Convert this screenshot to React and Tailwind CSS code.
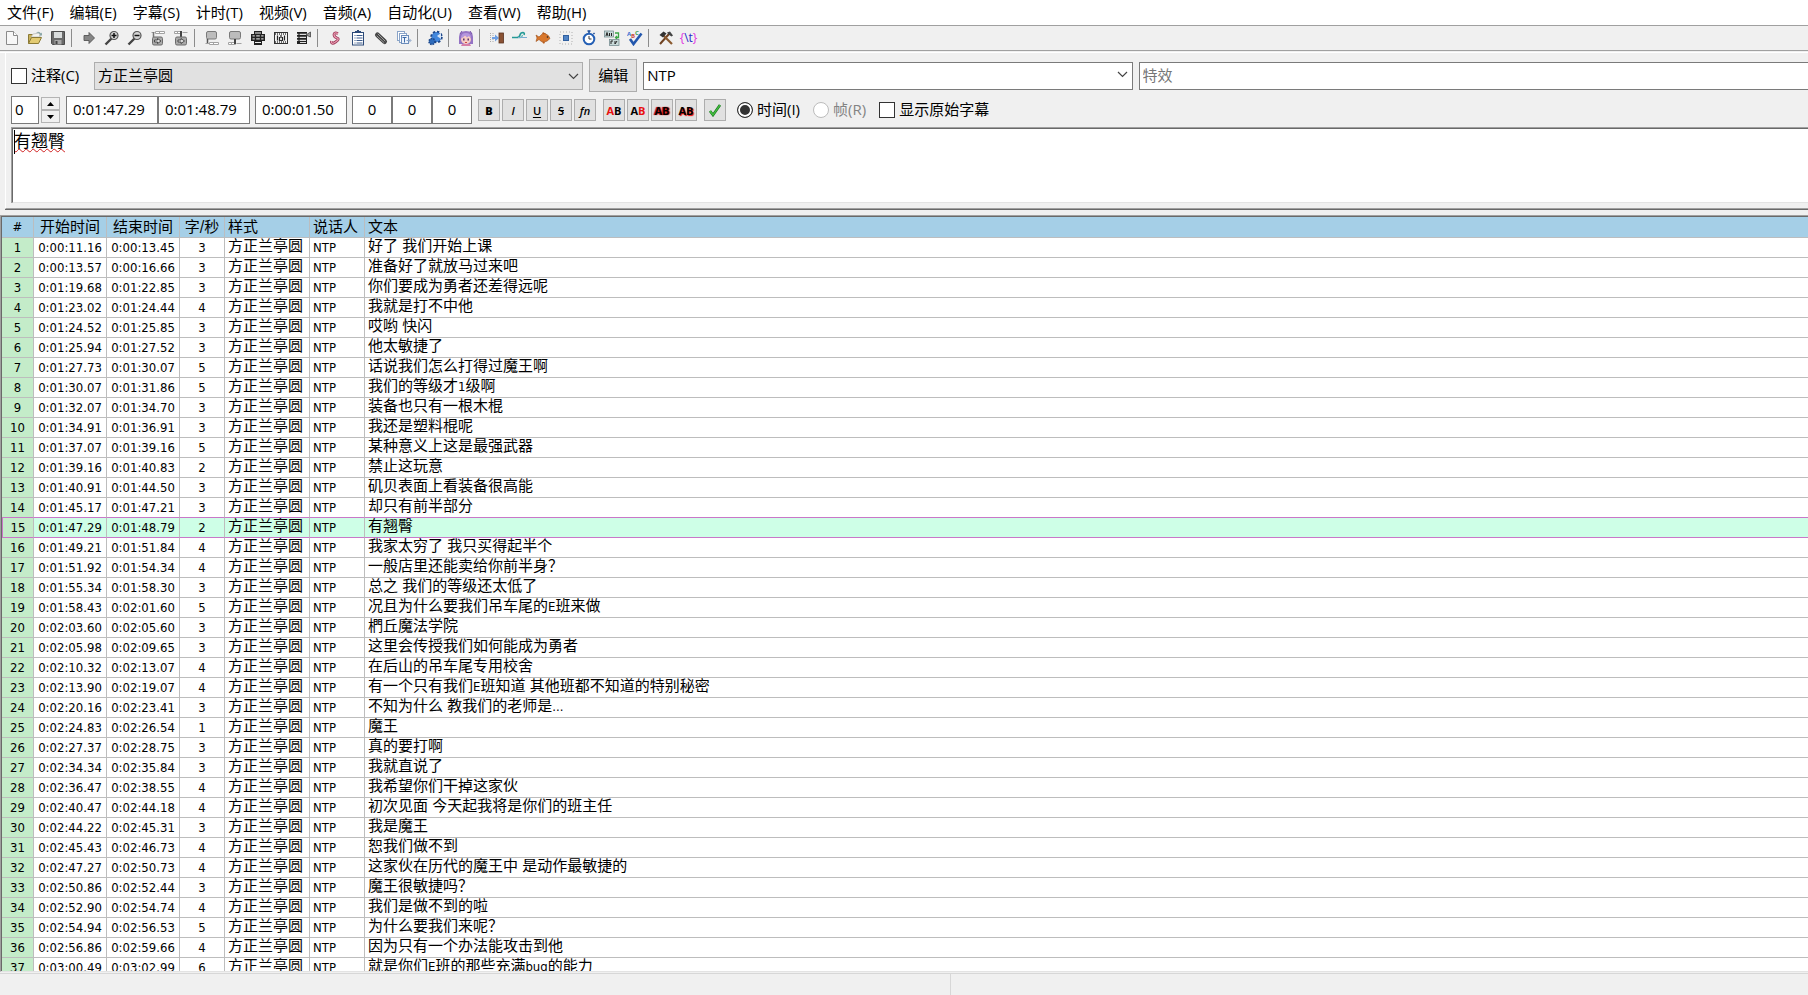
import { Fragment } from "react";

const menus = ["文件(F)", "编辑(E)", "字幕(S)", "计时(T)", "视频(V)", "音频(A)", "自动化(U)", "查看(W)", "帮助(H)"];

const rows = [
  ["0:00:11.16", "0:00:13.45", 3, "好了 我们开始上课"],
  ["0:00:13.57", "0:00:16.66", 3, "准备好了就放马过来吧"],
  ["0:01:19.68", "0:01:22.85", 3, "你们要成为勇者还差得远呢"],
  ["0:01:23.02", "0:01:24.44", 4, "我就是打不中他"],
  ["0:01:24.52", "0:01:25.85", 3, "哎哟 快闪"],
  ["0:01:25.94", "0:01:27.52", 3, "他太敏捷了"],
  ["0:01:27.73", "0:01:30.07", 5, "话说我们怎么打得过魔王啊"],
  ["0:01:30.07", "0:01:31.86", 5, "我们的等级才1级啊"],
  ["0:01:32.07", "0:01:34.70", 3, "装备也只有一根木棍"],
  ["0:01:34.91", "0:01:36.91", 3, "我还是塑料棍呢"],
  ["0:01:37.07", "0:01:39.16", 5, "某种意义上这是最强武器"],
  ["0:01:39.16", "0:01:40.83", 2, "禁止这玩意"],
  ["0:01:40.91", "0:01:44.50", 3, "矶贝表面上看装备很高能"],
  ["0:01:45.17", "0:01:47.21", 3, "却只有前半部分"],
  ["0:01:47.29", "0:01:48.79", 2, "有翘臀"],
  ["0:01:49.21", "0:01:51.84", 4, "我家太穷了 我只买得起半个"],
  ["0:01:51.92", "0:01:54.34", 4, "一般店里还能卖给你前半身？"],
  ["0:01:55.34", "0:01:58.30", 3, "总之 我们的等级还太低了"],
  ["0:01:58.43", "0:02:01.60", 5, "况且为什么要我们吊车尾的E班来做"],
  ["0:02:03.60", "0:02:05.60", 3, "椚丘魔法学院"],
  ["0:02:05.98", "0:02:09.65", 3, "这里会传授我们如何能成为勇者"],
  ["0:02:10.32", "0:02:13.07", 4, "在后山的吊车尾专用校舍"],
  ["0:02:13.90", "0:02:19.07", 4, "有一个只有我们E班知道 其他班都不知道的特别秘密"],
  ["0:02:20.16", "0:02:23.41", 3, "不知为什么 教我们的老师是..."],
  ["0:02:24.83", "0:02:26.54", 1, "魔王"],
  ["0:02:27.37", "0:02:28.75", 3, "真的要打啊"],
  ["0:02:34.34", "0:02:35.84", 3, "我就直说了"],
  ["0:02:36.47", "0:02:38.55", 4, "我希望你们干掉这家伙"],
  ["0:02:40.47", "0:02:44.18", 4, "初次见面 今天起我将是你们的班主任"],
  ["0:02:44.22", "0:02:45.31", 3, "我是魔王"],
  ["0:02:45.43", "0:02:46.73", 4, "恕我们做不到"],
  ["0:02:47.27", "0:02:50.73", 4, "这家伙在历代的魔王中 是动作最敏捷的"],
  ["0:02:50.86", "0:02:52.44", 3, "魔王很敏捷吗？"],
  ["0:02:52.90", "0:02:54.74", 4, "我们是做不到的啦"],
  ["0:02:54.94", "0:02:56.53", 5, "为什么要我们来呢？"],
  ["0:02:56.86", "0:02:59.66", 4, "因为只有一个办法能攻击到他"],
  ["0:03:00.49", "0:03:02.99", 6, "就是你们E班的那些充满bug的能力"],
];

const ACTIVE = 14;

const icons = {
  newFile: (
    <>
      <path d="M2.5 1.5h7l4 4v9h-11z" fill="#f7f7f7" stroke="#8a8a8a" />
      <path d="M9.5 1.5v4h4" fill="#fff" stroke="#8a8a8a" />
    </>
  ),
  open: (
    <>
      <path d="M1.5 13.5v-9h4l1 1.5h5v2" fill="#c9b25c" stroke="#8b7a35" />
      <path d="M4 7l2-3 7-1v4z" fill="#f4f4ee" stroke="#aaa" strokeWidth=".6" />
      <path d="M1.5 13.5l3-6h10l-3 6z" fill="#e3cb72" stroke="#8b7a35" />
      <path d="M9 2.500q3-2 5 1l1-1v3h-3l1-1q-1-2-4-2z" fill="#8aa7a8" />
    </>
  ),
  save: (
    <>
      <path d="M1.500 1.500h13v13h-12l-1-1z" fill="#6a6a6a" stroke="#4c4c4c" />
      <path d="M4 2h8v6H4z" fill="#d9dcdc" />
      <path d="M4.500 10h7v4.500h-7z" fill="#a9a9a9" />
      <path d="M5.500 11h2v3h-2z" fill="#444" />
    </>
  ),
  jump: <path d="M3 5.500h5v-3l5.500 5.500-5.500 5.500v-3H3z" fill="#858585" stroke="#555" strokeWidth=".9" />,
  zoomIn: (
    <>
      <path d="M1.500 14.500l6-6" stroke="#444" strokeWidth="2.400" />
      <circle cx="10" cy="5.500" r="4" fill="#d4d4d4" stroke="#555" strokeWidth="1.200" />
      <path d="M7.500 5.500h5M10 3v5" stroke="#111" strokeWidth="1.500" />
    </>
  ),
  zoomOut: (
    <>
      <path d="M1.500 14.500l6-6" stroke="#444" strokeWidth="2.400" />
      <circle cx="10" cy="5.500" r="4" fill="#d4d4d4" stroke="#555" strokeWidth="1.200" />
      <path d="M7.500 5.500h5" stroke="#111" strokeWidth="1.500" />
    </>
  ),
  videoStart: (
    <>
      <path d="M5.500 1.500h9v2h-9zM9.500 1.500v2M1.500 2.500h3" fill="#fff" stroke="#a2a2a2" />
      <path d="M3.500 2v5" stroke="#777" strokeWidth="1.500" />
      <rect x="2.500" y="7" width="10" height="8" rx="1.500" fill="#a9a9a9" stroke="#6c6c6c" />
      <path d="M4.500 10h3V8.500l3.500 2.500-3.500 2.500V12h-3z" fill="#ddd" stroke="#333" strokeWidth=".8" />
    </>
  ),
  videoEnd: (
    <>
      <path d="M1.500 1.500h6v2h-6zM4.500 1.500v2M9.500 2.500h5" fill="#fff" stroke="#a2a2a2" />
      <path d="M8 1v6" stroke="#444" strokeWidth="2" />
      <rect x="2.500" y="7" width="11" height="8" rx="1.500" fill="#a9a9a9" stroke="#6c6c6c" />
      <path d="M5 10h3V8.500l3.500 2.500L8 13.500V12H5z" fill="#ddd" stroke="#333" strokeWidth=".8" />
    </>
  ),
  setStart: (
    <>
      <rect x="2.500" y="1.500" width="10" height="7.500" rx="1.500" fill="#bcbcbc" stroke="#7a7a7a" />
      <path d="M3.500 9v5" stroke="#555" strokeWidth="1.500" />
      <path d="M1.500 13.500h4M5.500 12.500h9v2h-9zM9.500 12.500v2" fill="#fff" stroke="#a2a2a2" />
    </>
  ),
  setEnd: (
    <>
      <rect x="2.500" y="1.500" width="11" height="7.500" rx="1.500" fill="#bcbcbc" stroke="#7a7a7a" />
      <path d="M1.500 12.500h7v2h-7zM4.500 12.500v2M9.500 13.500h5" fill="#fff" stroke="#a2a2a2" />
      <path d="M8 9v5" stroke="#444" strokeWidth="2" />
    </>
  ),
  snapScene: (
    <>
      <path d="M4 1h8v3h3v7h-3v4H4v-4H1V4h3z" fill="#222" />
      <path d="M5 3h6M5 12.500h6" stroke="#eee" strokeWidth="1.200" />
      <path d="M2.500 5.800h11M2.500 8.800h11" stroke="#ccc" strokeWidth="1.200" />
      <path d="M5.500 4v8M10.500 4v8" stroke="#222" strokeWidth="1.400" />
    </>
  ),
  selectVisible: (
    <>
      <rect x="1.500" y="2.500" width="13" height="11" fill="#f2f2f2" stroke="#333" />
      <path d="M2 4h12M2 12h12" stroke="#444" strokeWidth="1.500" strokeDasharray="1 1" />
      <path d="M4.500 5.500v5M11.500 5.500v5M6.500 7v4M9.500 7v4M8 5v3" stroke="#222" strokeWidth="1.200" />
      <path d="M6.500 10.500h3" stroke="#333" />
    </>
  ),
  snapVideo: (
    <>
      <rect x="1" y="2" width="10" height="12" fill="#222" />
      <path d="M1 4.300h10M1 7.300h9M1 10.300h9M4 12.500h6" stroke="#ddd" strokeWidth="1.200" />
      <path d="M3 2v12" stroke="#222" strokeWidth="1.200" />
      <path d="M10 5l4.500-3v5z" fill="#999" stroke="#333" strokeWidth=".7" />
    </>
  ),
  style: (
    <>
      <path d="M11 3.500q-4-1.500-4 1t3 3.500-1.500 4-4-1" fill="none" stroke="#9b3957" strokeWidth="2.800" />
      <path d="M11 3.500q-4-1.500-4 1t3 3.500-1.500 4-4-1" fill="none" stroke="#eb9bb2" strokeWidth="1.200" />
    </>
  ),
  props: (
    <>
      <rect x="2.500" y="2.500" width="11" height="12.500" fill="#fff" stroke="#2c4a78" />
      <path d="M5 2.500h6V1H9V0H7v1H5z" fill="#2c4a78" />
      <path d="M4.500 5.500h1M6.500 5.500h6M4.500 8h1M6.500 8h6M4.500 10.500h1M6.500 10.500h6M4.500 13h1M6.500 13h6" stroke="#3e5d8d" />
    </>
  ),
  attach: (
    <>
      <path d="M4.500 5l7 6.500" stroke="#444" strokeWidth="5" strokeLinecap="round" />
      <path d="M5 4l7 7M4 6l7 6.500" stroke="#a8a8a8" strokeWidth=".9" strokeLinecap="round" />
    </>
  ),
  fonts: (
    <>
      <rect x="1.500" y="1.500" width="7" height="9" fill="#fff" stroke="#8aa4c8" />
      <rect x="3.500" y="3.500" width="7" height="9" fill="#fff" stroke="#8aa4c8" />
      <rect x="5.500" y="5.500" width="7" height="8" fill="#eef4fc" stroke="#6b8dbb" />
      <path d="M6.500 7.500h4M8.500 7.500v5" stroke="#3a69a8" />
      <path d="M10.500 10.500h4M13 8.500l2 2-2 2" stroke="#8aa4c8" fill="none" />
    </>
  ),
  automation: (
    <>
      <circle cx="9.500" cy="7" r="5" fill="#3d7ed0" stroke="#1c4587" strokeWidth="2.500" strokeDasharray="2.200 1.700" />
      <circle cx="9.500" cy="7" r="4.500" fill="#4387dc" />
      <path d="M10 6l4-3v6z" fill="#d8e6f8" />
      <circle cx="5" cy="11.500" r="3" fill="#2f6cbc" stroke="#1c4587" strokeWidth="1.500" strokeDasharray="1.500 1" />
    </>
  ),
  assistant: (
    <>
      <path d="M1 7Q1 1 8 1t7 6v7H1z" fill="#9473c4" />
      <path d="M2 4l2-3M14 4l-2-3" stroke="#7652a8" />
      <ellipse cx="8" cy="9.500" rx="5" ry="4.500" fill="#f8cdc4" />
      <path d="M3 8q0-5 5-5t5 5l-2-2-2 1.500-2-2-2 2z" fill="#b596dd" />
      <path d="M5.800 8.500v2M10.200 8.500v2" stroke="#4a2b66" strokeWidth="1.400" />
      <path d="M7 12.500h2" stroke="#c44" />
      <path d="M4 14h8l1 2H3z" fill="#d77fa8" />
    </>
  ),
  shift: (
    <>
      <path d="M1.500 3v10M4 3v10" stroke="#aaa" strokeDasharray="1 1" />
      <path d="M3 7h3V4.500L10 8l-4 3.500V9H3z" fill="#6fa0e4" />
      <rect x="10" y="3" width="4.500" height="10" fill="#8a5234" stroke="#5a3220" strokeWidth=".8" />
    </>
  ),
  timing: (
    <>
      <path d="M0 7.500h5q2.500 0 3-2.500T11 2.500q2 .5 1 2.500" fill="none" stroke="#259a96" strokeWidth="1.600" />
      <path d="M7 7.500q3 .5 3.500-2.500" fill="none" stroke="#5fbab5" strokeWidth="1.300" />
      <path d="M6 7.500h9" stroke="#79aed2" />
    </>
  ),
  kanji: (
    <>
      <path d="M1 5l3 2q3-4 6-3.500Q14 5 15 8.500 12 12 9 12q-3 0-5-2.500L1 11.500 2 8z" fill="#d9772b" stroke="#9b4b14" strokeWidth=".6" />
      <path d="M7 4l1-2 3 2M7 12l2 2 1-2" fill="#b75c1c" />
      <circle cx="12.500" cy="7" r=".8" fill="#222" />
    </>
  ),
  resample: (
    <>
      <rect x="2" y="2" width="12" height="12" fill="none" stroke="#b0b0b0" strokeDasharray="1 2" />
      <rect x="5.500" y="5.500" width="5" height="5" fill="#4e82c4" stroke="#2f5f9f" />
    </>
  ),
  timer: (
    <>
      <path d="M6.500 1h3M8 1v2M12.500 3l1 1" stroke="#1b4a96" strokeWidth="1.500" />
      <circle cx="8" cy="9" r="5.300" fill="#fff" stroke="#2560b5" strokeWidth="2" />
      <path d="M8 6v3h2.500" stroke="#333" fill="none" />
    </>
  ),
  translate: (
    <>
      <rect x=".5" y="1" width="9" height="6" fill="#c8d9d9" stroke="#6a8388" strokeWidth=".7" />
      <path d="M2 6l1-3.500L4 6M5.500 3v3M7.500 3v3" stroke="#222" fill="none" />
      <path d="M11 3h3.500v4.500H12M13 6l-1.500 1.500L13 9" stroke="#3aa648" strokeWidth="1.300" fill="none" />
      <rect x="5.500" y="9.500" width="9.500" height="6" fill="#c8d9d9" stroke="#6a8388" strokeWidth=".7" />
      <path d="M7 14v-3h2M11 11v3l2-3" stroke="#222" fill="none" />
    </>
  ),
  spell: (
    <>
      <path d="M3 9l3.500 5L14.500 3.500" fill="none" stroke="#2357ad" strokeWidth="2.600" />
      <text x="0" y="6" fontSize="6" fontWeight="700" fill="#3a6fd0">A</text>
      <text x="4" y="8" fontSize="6" fontWeight="700" fill="#c8443d">B</text>
      <text x="8" y="5" fontSize="6" fontWeight="700" fill="#3a9b4a">C</text>
    </>
  ),
  options: (
    <>
      <path d="M2 14L11 4" stroke="#6f4222" strokeWidth="2" />
      <path d="M5 5l9 9" stroke="#8a5a30" strokeWidth="2.200" />
      <path d="M1.500 5l4-3.500 3 2-3.500 4z" fill="#333" />
      <path d="M9 2.500l3-1 3 4-1.500 1-3-2z" fill="#444" />
    </>
  ),
};

const toolbar = [
  [["新建", "newFile"], ["打开", "open"], ["保存", "save"]],
  [["跳转", "jump"], ["放大", "zoomIn"], ["缩小", "zoomOut"], ["视频到开始", "videoStart"], ["视频到结束", "videoEnd"]],
  [["设置开始", "setStart"], ["设置结束", "setEnd"], ["对齐场景", "snapScene"], ["选择可见", "selectVisible"], ["对齐视频", "snapVideo"]],
  [["样式", "style"], ["属性", "props"], ["附件", "attach"], ["字体", "fonts"]],
  [["自动化", "automation"]],
  [["助手", "assistant"]],
  [["平移时间", "shift"], ["后期处理", "timing"], ["汉字计时", "kanji"], ["重设分辨率", "resample"], ["计时", "timer"], ["翻译", "translate"], ["拼写检查", "spell"]],
  [["选项", "options"], ["标签", "tags"]],
];

const fieldClass = "h-7 border border-[#7a7a7a] bg-white pb-0.5 outline-none";
const smallButton = "flex h-[22px] w-[22px] items-center justify-center border border-[#adadad] bg-[#e1e1e1] text-[11px] leading-none";

function ToolButton({ label, icon }) {
  return (
    <button type="button" aria-label={label} className="flex h-6 w-[23px] items-center justify-center">
      {icon === "tags" ? (
        <span className="text-[12px] text-[#e030e0]">
          {"{"}
          <span className="text-[#2a2ac8]">\t</span>
          {"}"}
        </span>
      ) : (
        <svg width="16" height="16" viewBox="0 0 16 16" fill="none">{icons[icon]}</svg>
      )}
    </button>
  );
}

function Chevron() {
  return (
    <svg width="11" height="7" viewBox="0 0 11 7" fill="none" stroke="#444" strokeWidth="1.200">
      <path d="M1 1l4.500 4.500L10 1" />
    </svg>
  );
}

function CheckBox({ label }) {
  return (
    <label className="flex items-center gap-1">
      <input type="checkbox" className="h-4 w-4 appearance-none border border-[#333] bg-white" />
      <span className="pb-0.5 whitespace-nowrap">{label}</span>
    </label>
  );
}

// Latin runs are drawn smaller than the Chinese text around them
function LineText({ text }) {
  return text.split(/([A-Za-z0-9.]+)/).map((part, i) => (i % 2 ? <span key={i} className="text-[13px]">{part}</span> : part));
}

function EditBox() {
  return (
    <section className="ml-[5px] flex flex-col border-b border-l border-b-[#a0a0a0] border-l-white pt-1.5 pb-[5px] pl-[5px] shadow-[0_1px_0_#696969]">
      <div className="flex h-[33px] items-center gap-1.5">
        <div className="w-[77px]"><CheckBox label="注释(C)" /></div>
        <div className="relative flex h-7 min-w-0 flex-[489_1_0%]">
          <select aria-label="样式" className="w-full appearance-none border border-[#adadad] bg-[#e1e1e1] px-[3px] pb-0.5 outline-none">
            <option>方正兰亭圆</option>
          </select>
          <span className="pointer-events-none absolute top-[11px] right-1"><Chevron /></span>
        </div>
        <button type="button" className="h-[33px] w-12 border border-[#adadad] bg-[#e1e1e1] pb-0.5">编辑</button>
        <div className={`flex min-w-0 flex-[487_1_0%] items-center ${fieldClass}`}>
          <input aria-label="说话人" defaultValue="NTP" className="min-w-0 flex-1 px-[3px] outline-none" />
          <button type="button" aria-label="展开说话人" className="pr-1"><Chevron /></button>
        </div>
        <input aria-label="特效" placeholder="特效" className={`min-w-0 flex-[662_1_0%] border-r-0 px-[3px] placeholder:text-[#767676] ${fieldClass}`} />
      </div>

      <div className="mt-1 flex h-7 items-center">
        <input aria-label="层" defaultValue="0" className={`w-7 px-[3px] ${fieldClass}`} />
        <div className="ml-0.5 flex w-[19px] flex-col">
          {["M0 4l3.500-4L7 4z", "M0 0l3.500 4L7 0z"].map((d, i) => (
            <button key={d} type="button" aria-label={i ? "减少" : "增加"} className="flex h-[13px] items-center justify-center border border-[#b4b4b4] bg-[#f0f0f0]">
              <svg width="7" height="4" viewBox="0 0 7 4"><path d={d} /></svg>
            </button>
          ))}
        </div>
        <input aria-label="开始时间" defaultValue="0:01:47.29" className={`ml-1.5 w-[92px] px-1.5 ${fieldClass}`} />
        <input aria-label="结束时间" defaultValue="0:01:48.79" className={`w-[92px] px-1.5 ${fieldClass}`} />
        <input aria-label="时长" defaultValue="0:00:01.50" className={`ml-[5px] w-[92px] px-1.5 ${fieldClass}`} />
        <div className="ml-[5px] flex">
          {["左边距", "右边距", "垂直边距"].map((name) => (
            <input key={name} aria-label={name} defaultValue="0" className={`w-10 text-center ${fieldClass}`} />
          ))}
        </div>

        <div className="ml-1.5 flex gap-0.5">
          <button type="button" aria-label="粗体" className={`font-extrabold ${smallButton}`}>B</button>
          <button type="button" aria-label="斜体" className={`font-semibold italic ${smallButton}`}>I</button>
          <button type="button" aria-label="下划线" className={`font-semibold underline underline-offset-2 ${smallButton}`}>U</button>
          <button type="button" aria-label="删除线" className={`font-semibold line-through ${smallButton}`}>S</button>
          <button type="button" aria-label="字体名" className={`font-semibold italic ${smallButton}`}>fn</button>
        </div>
        <div className="ml-[7px] flex gap-0.5">
          <button type="button" aria-label="主要颜色" className={`font-bold ${smallButton}`}><span className="text-[#e81010]">A</span>B</button>
          <button type="button" aria-label="次要颜色" className={`font-bold ${smallButton}`}>A<span className="text-[#e81010]">B</span></button>
          <button type="button" aria-label="边框颜色" className={`font-bold text-shadow-[1px_0_1px_#c00,-1px_0_1px_#c00] ${smallButton}`}>AB</button>
          <button type="button" aria-label="阴影颜色" className={`font-bold text-shadow-[1px_1px_1px_#e00] ${smallButton}`}>AB</button>
        </div>
        <button type="button" aria-label="提交" className={`ml-[7px] ${smallButton}`}>
          <svg width="14" height="14" viewBox="0 0 14 14" fill="none">
            <path d="M2 8l3 4L12 2" stroke="#1b7a22" strokeWidth="2.600" />
            <path d="M2 8l3 4L12 2" stroke="#46c440" strokeWidth="1.300" />
          </svg>
        </button>

        <label className="ml-[11px] flex items-center gap-1">
          <input type="radio" name="unit" defaultChecked className="h-4 w-4 appearance-none rounded-full border border-[#333] bg-white checked:bg-[#333] checked:shadow-[inset_0_0_0_2px_#fff]" />
          <span className="pb-0.5">时间(I)</span>
        </label>
        <label className="ml-[13px] flex items-center gap-1 text-[#838383]">
          <input type="radio" name="unit" disabled className="h-4 w-4 appearance-none rounded-full border border-[#bcbcbc] bg-white" />
          <span className="pb-0.5">帧(R)</span>
        </label>
        <div className="ml-[13px]"><CheckBox label="显示原始字幕" /></div>
      </div>

      <div className="relative mt-[3px] flex h-[76px] border-t border-l border-[#a0a0a0]">
        <textarea
          aria-label="字幕文本"
          spellCheck={false}
          defaultValue="有翘臀"
          className="w-full resize-none border-t border-b border-l border-t-[#696969] border-b-[#e3e3e3] border-l-[#696969] bg-white px-px text-[17px] leading-6 underline decoration-[#d02020] decoration-wavy decoration-1 underline-offset-1 outline-none"
        />
        <span className="absolute top-0.5 left-0.5 h-6 w-px bg-black" />
      </div>
    </section>
  );
}

function SubtitleGrid() {
  return (
    <div className="mt-1.5 min-h-0 flex-1 overflow-hidden border-t border-b border-l border-t-[#a0a0a0] border-b-[#e3e3e3] border-l-[#a0a0a0]">
      <div className="h-full overflow-hidden border-t border-l border-[#696969] bg-white">
        <table className="w-full table-fixed border-separate border-spacing-0 text-left font-['DejaVu_Sans_Condensed','Noto_Sans_CJK_SC',sans-serif] text-[15px] leading-[18px] whitespace-nowrap">
          <colgroup>
            <col className="w-8" />
            <col className="w-[73px]" />
            <col className="w-[73px]" />
            <col className="w-[45px]" />
            <col className="w-[85px]" />
            <col className="w-[55px]" />
            <col />
          </colgroup>
          <thead>
            <tr className="h-[21px] bg-[#a5cfe7] [&>th]:border-r [&>th]:border-b [&>th]:border-[#bbbdbf] [&>th]:p-0 [&>th]:font-normal [&>th:last-child]:border-r-0">
              <th className="text-center text-[13px]">#</th>
              <th className="text-center">开始时间</th>
              <th className="text-center">结束时间</th>
              <th className="text-center">字/秒</th>
              <th><span className="pl-[3px]">样式</span></th>
              <th><span className="pl-[3px]">说话人</span></th>
              <th><span className="pl-[3px]">文本</span></th>
            </tr>
          </thead>
          <tbody>
            {rows.map(([start, end, cps, text], i) => {
              const line = i === ACTIVE || i === ACTIVE - 1 ? "[&>td]:border-b-[#c878c8]" : "[&>td]:border-b-[#bdbdbd]";
              return (
                <tr key={start} className={`h-5 [&>td]:border-r [&>td]:border-b [&>td]:border-r-[#bdbdbd] [&>td]:p-0 [&>td:last-child]:border-r-0 ${line} ${i === ACTIVE ? "bg-[#ceffe7]" : ""}`}>
                  <td className={`bg-[#c4ecc9] text-center text-[13px] ${i === ACTIVE ? "border-l border-l-[#c878c8]" : ""}`}>{i + 1}</td>
                  <td className="text-center text-[13px]">{start}</td>
                  <td className="text-center text-[13px]">{end}</td>
                  <td className="text-center text-[13px]">{cps}</td>
                  <td className="align-top leading-[17px]"><span className="pl-[3px]">方正兰亭圆</span></td>
                  <td className="text-[13px]"><span className="pl-[3px]">NTP</span></td>
                  <td className="align-top leading-[17px]"><span className="pl-[3px]"><LineText text={text} /></span></td>
                </tr>
              );
            })}
          </tbody>
        </table>
      </div>
    </div>
  );
}

export default function App() {
  return (
    <div className="flex h-screen flex-col overflow-hidden bg-[#f0f0f0] font-['Open_Sans','Noto_Sans_CJK_SC',sans-serif] text-[15px] leading-5 text-black">
      <nav className="flex h-[26px] items-center gap-4 border-b border-[#a0a0a0] bg-white px-[7px] pb-0.5">
        {menus.map((menu) => (
          <button key={menu} type="button" className="whitespace-nowrap">{menu}</button>
        ))}
      </nav>
      <div className="flex h-[25px] border-b border-[#a0a0a0]">
        {toolbar.map((group, i) => (
          <Fragment key={i}>
            {i > 0 && <span className="mt-[3px] mr-[5px] ml-0.5 h-[18px] w-px bg-[#8c8c8c]" />}
            {group.map(([label, icon]) => (
              <ToolButton key={label} label={label} icon={icon} />
            ))}
          </Fragment>
        ))}
      </div>
      <div className="mt-px h-px bg-white" />
      <EditBox />
      <SubtitleGrid />
      <footer className="mt-px flex h-[22px] border-t border-[#d7d7d7]">
        <div className="w-[950px]" />
        <div className="flex-1 border-l border-[#d7d7d7]" />
      </footer>
    </div>
  );
}
